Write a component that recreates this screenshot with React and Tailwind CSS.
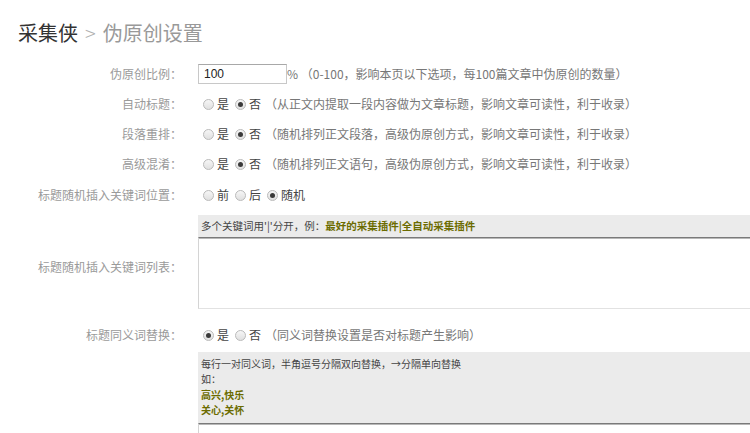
import React from "react"

const font = { fontFamily: '"Noto Sans CJK SC", "Noto Sans", sans-serif' }

function Radio({ checked }) {
    return (
        <span className="inline-flex w-[11px] h-[11px] ml-[5px] mr-[3px] rounded-full border border-[#bababa] bg-[linear-gradient(#f6f6f6,#e0e0e0)] items-center justify-center shrink-0">
            {checked && <span className="w-[5px] h-[5px] rounded-full bg-[#3a3a3a]" />}
        </span>
    )
}

function Label({ children, className = "" }) {
    return (
        <div className={"w-[164px] shrink-0 text-right text-[12px] text-[#9a9a9a] " + className}>
            {children}
        </div>
    )
}

function Options({ items, note }) {
    return (
        <div className="flex items-center text-[12px] leading-[18px]">
            {items.map((it) => (
                <span key={it.text} className="flex items-center mr-[1px]">
                    <Radio checked={it.checked} />
                    <span className="text-[#444]">{it.text}</span>
                </span>
            ))}
            {note && <span className="ml-[3px] text-[#777] whitespace-nowrap">{note}</span>}
        </div>
    )
}

function Row({ label, children, h = "h-[30px]" }) {
    return (
        <div className={"flex items-center " + h}>
            <Label>{label}</Label>
            <div className="ml-[16px] flex-1">{children}</div>
        </div>
    )
}

export default function App() {
    return (
        <div className="w-full h-[433px] overflow-hidden bg-white" style={font}>
            <div className="w-[800px] pt-[20px] pl-[18px]">
                <h1 className="text-[20px] leading-[26px] font-normal text-[#333]">
                    采集侠<span className="text-[#b0b0b0] mx-[7px] font-light">&gt;</span><span className="text-[#999]">伪原创设置</span>
                </h1>

                <div className="mt-[13px]">
                    <Row label="伪原创比例：">
                        <div className="flex items-center">
                            <div className="w-[89px] h-[20px] border border-[#c8c8c8] border-t-[#a8a8a8] pl-[5px] text-[12px] leading-[18px] text-[#222]" style={{ fontFamily: '"Liberation Sans", Arial, sans-serif' }}>
                                100
                            </div>
                            <span className="text-[12px] text-[#777] whitespace-nowrap">% （0-100，影响本页以下选项，每100篇文章中伪原创的数量）</span>
                        </div>
                    </Row>

                    <Row label="自动标题：">
                        <Options items={[{ text: "是" }, { text: "否", checked: true }]} note="（从正文内提取一段内容做为文章标题，影响文章可读性，利于收录）" />
                    </Row>

                    <Row label="段落重排：">
                        <Options items={[{ text: "是" }, { text: "否", checked: true }]} note="（随机排列正文段落，高级伪原创方式，影响文章可读性，利于收录）" />
                    </Row>

                    <Row label="高级混淆：">
                        <Options items={[{ text: "是" }, { text: "否", checked: true }]} note="（随机排列正文语句，高级伪原创方式，影响文章可读性，利于收录）" />
                    </Row>

                    <Row label="标题随机插入关键词位置：" h="h-[32px]">
                        <Options items={[{ text: "前" }, { text: "后" }, { text: "随机", checked: true }]} />
                    </Row>

                    <div className="flex items-start mt-[4px]">
                        <Label className="mt-[43px] leading-[18px]">标题随机插入关键词列表：</Label>
                        <div className="ml-[16px] flex-1">
                            <div className="h-[22px] bg-[#ebebeb] pl-[3px] text-[10.5px] leading-[22px] text-[#444] whitespace-nowrap">
                                多个关键词用'|'分开，例：<span className="font-bold text-[#6b6b00]">最好的采集插件|全自动采集插件</span>
                            </div>
                            <div className="h-[72px] bg-white border border-[#d4d4d4] border-t-[#7a7a7a] border-b-[#e2e2e2] shadow-[inset_0_1px_0_#b8b8b8]" />
                        </div>
                    </div>

                    <div className="mt-[11px]">
                        <Row label="标题同义词替换：">
                            <Options items={[{ text: "是", checked: true }, { text: "否" }]} note="（同义词替换设置是否对标题产生影响）" />
                        </Row>
                    </div>

                    <div className="flex items-start mt-[2px]">
                        <div className="w-[164px] shrink-0" />
                        <div className="ml-[16px] flex-1">
                            <div className="bg-[#ebebeb] pl-[3px] pt-[4px] pb-[6px] text-[10px] leading-[15.3px] text-[#444] whitespace-nowrap">
                                <div>每行一对同义词，半角逗号分隔双向替换，→分隔单向替换</div>
                                <div>如：</div>
                                <div className="font-bold text-[#6b6b00]">高兴,快乐</div>
                                <div className="font-bold text-[#6b6b00]">关心,关怀</div>
                            </div>
                            <div className="h-[72px] bg-white border border-[#d4d4d4] border-t-[#7a7a7a] shadow-[inset_0_1px_0_#b8b8b8]" />
                        </div>
                    </div>
                </div>
            </div>
        </div>
    )
}
